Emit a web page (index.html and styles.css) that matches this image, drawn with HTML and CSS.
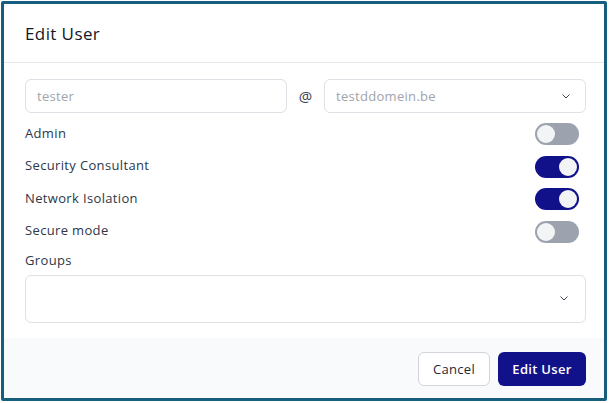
FILE: index.html
```html
<!DOCTYPE html>
<html>
<head>
<meta charset="utf-8">
<link rel="stylesheet" href="styles.css">
</head>
<body>
<div class="modal">
  <div class="modal-header"><h1 class="title">Edit User</h1></div>
  <div class="modal-body">
    <div class="email-row">
      <div class="input"><span class="placeholder">tester</span></div>
      <span class="at">@</span>
      <div class="input select"><span class="placeholder">testddomein.be</span>
        <svg class="chev" width="8" height="5" viewBox="0 0 8 5"><path d="M0.5 0.5l3.5 3.5 3.5-3.5" fill="none" stroke="#374151" stroke-width="1"/></svg>
      </div>
    </div>
    <div class="toggles">
      <div class="toggle-row"><span class="label">Admin</span><span class="switch"><span class="knob"></span></span></div>
      <div class="toggle-row"><span class="label">Security Consultant</span><span class="switch on"><span class="knob"></span></span></div>
      <div class="toggle-row"><span class="label">Network Isolation</span><span class="switch on"><span class="knob"></span></span></div>
      <div class="toggle-row"><span class="label">Secure mode</span><span class="switch"><span class="knob"></span></span></div>
    </div>
    <div class="label groups-label">Groups</div>
    <div class="input groups">
      <svg class="chev" width="8" height="5" viewBox="0 0 8 5"><path d="M0.5 0.5l3.5 3.5 3.5-3.5" fill="none" stroke="#374151" stroke-width="1"/></svg>
    </div>
  </div>
  <div class="modal-footer">
    <button class="btn cancel">Cancel</button>
    <button class="btn primary">Edit User</button>
  </div>
</div>
</body>
</html>
```
FILE: styles.css
```css
* { box-sizing: border-box; }
html, body { margin: 0; padding: 0; background: #fff; }
body { font-family: "Open Sans", "Liberation Sans", sans-serif; color: #374151; }
.modal {
  margin: 1px 0 0 1px;
  width: 606px;
  height: 400px;
  border: 3px solid #175e7e;
  border-radius: 2px;
  display: flex;
  flex-direction: column;
  background: #fff;
}
.modal-header {
  height: 59px;
  border-bottom: 1px solid #e5e7eb;
  display: flex;
  align-items: center;
  padding-left: 21px;
}
.title { margin: 0; font-size: 17px; font-weight: 500; color: #111827; padding-top: 1px; letter-spacing: 0.4px; }
.modal-body { padding: 16px 18px 15px 21px; }
.email-row { display: flex; align-items: center; }
.input {
  height: 34px;
  border: 1px solid #e0e0e6;
  border-radius: 6px;
  display: flex;
  align-items: center;
  padding: 0 11px;
  font-size: 13px;
  letter-spacing: 0.3px;
}
.email-row .input { flex: 0 0 262px; }
.email-row .select { flex: 0 0 262px; justify-content: space-between; padding-right: 15px; }
.placeholder { color: #a0a4ab; }
.at { flex: 1; text-align: center; font-size: 15px; color: #374151; }
.toggles { display: flex; flex-direction: column; gap: 10.5px; margin-top: 10px; padding-right: 7px; }
.toggle-row { height: 22px; display: flex; align-items: center; justify-content: space-between; }
.toggle-row .label { margin-top: -3px; }
.label { font-size: 13px; font-weight: 500; color: #2d3748; letter-spacing: 0.35px; }
.switch {
  width: 44px; height: 22px; border-radius: 11px; background: #9ca3af;
  display: flex; align-items: center; padding: 0 2px;
}
.switch.on { background: #11128a; justify-content: flex-end; }
.knob { width: 18px; height: 18px; border-radius: 50%; background: #f3f4f6; }
.groups-label { margin-top: 8px; line-height: 18px; }
.groups { height: 48px; margin-top: 6px; justify-content: flex-end; padding-right: 17px; }
.modal-footer {
  flex: 1;
  background: #f9fafb;
  display: flex;
  justify-content: flex-end;
  align-items: flex-start;
  gap: 8px;
  padding: 14px 18px 0 0;
}
.btn {
  height: 34px; border-radius: 6px; font-family: inherit; font-size: 13px; font-weight: 500; padding: 0; letter-spacing: 0.3px;
}
.cancel { width: 72px; background: #fff; border: 1px solid #d1d5db; color: #1f2937; }
.primary { width: 88px; background: #11128a; border: none; color: #fff; font-weight: 600; }
```
